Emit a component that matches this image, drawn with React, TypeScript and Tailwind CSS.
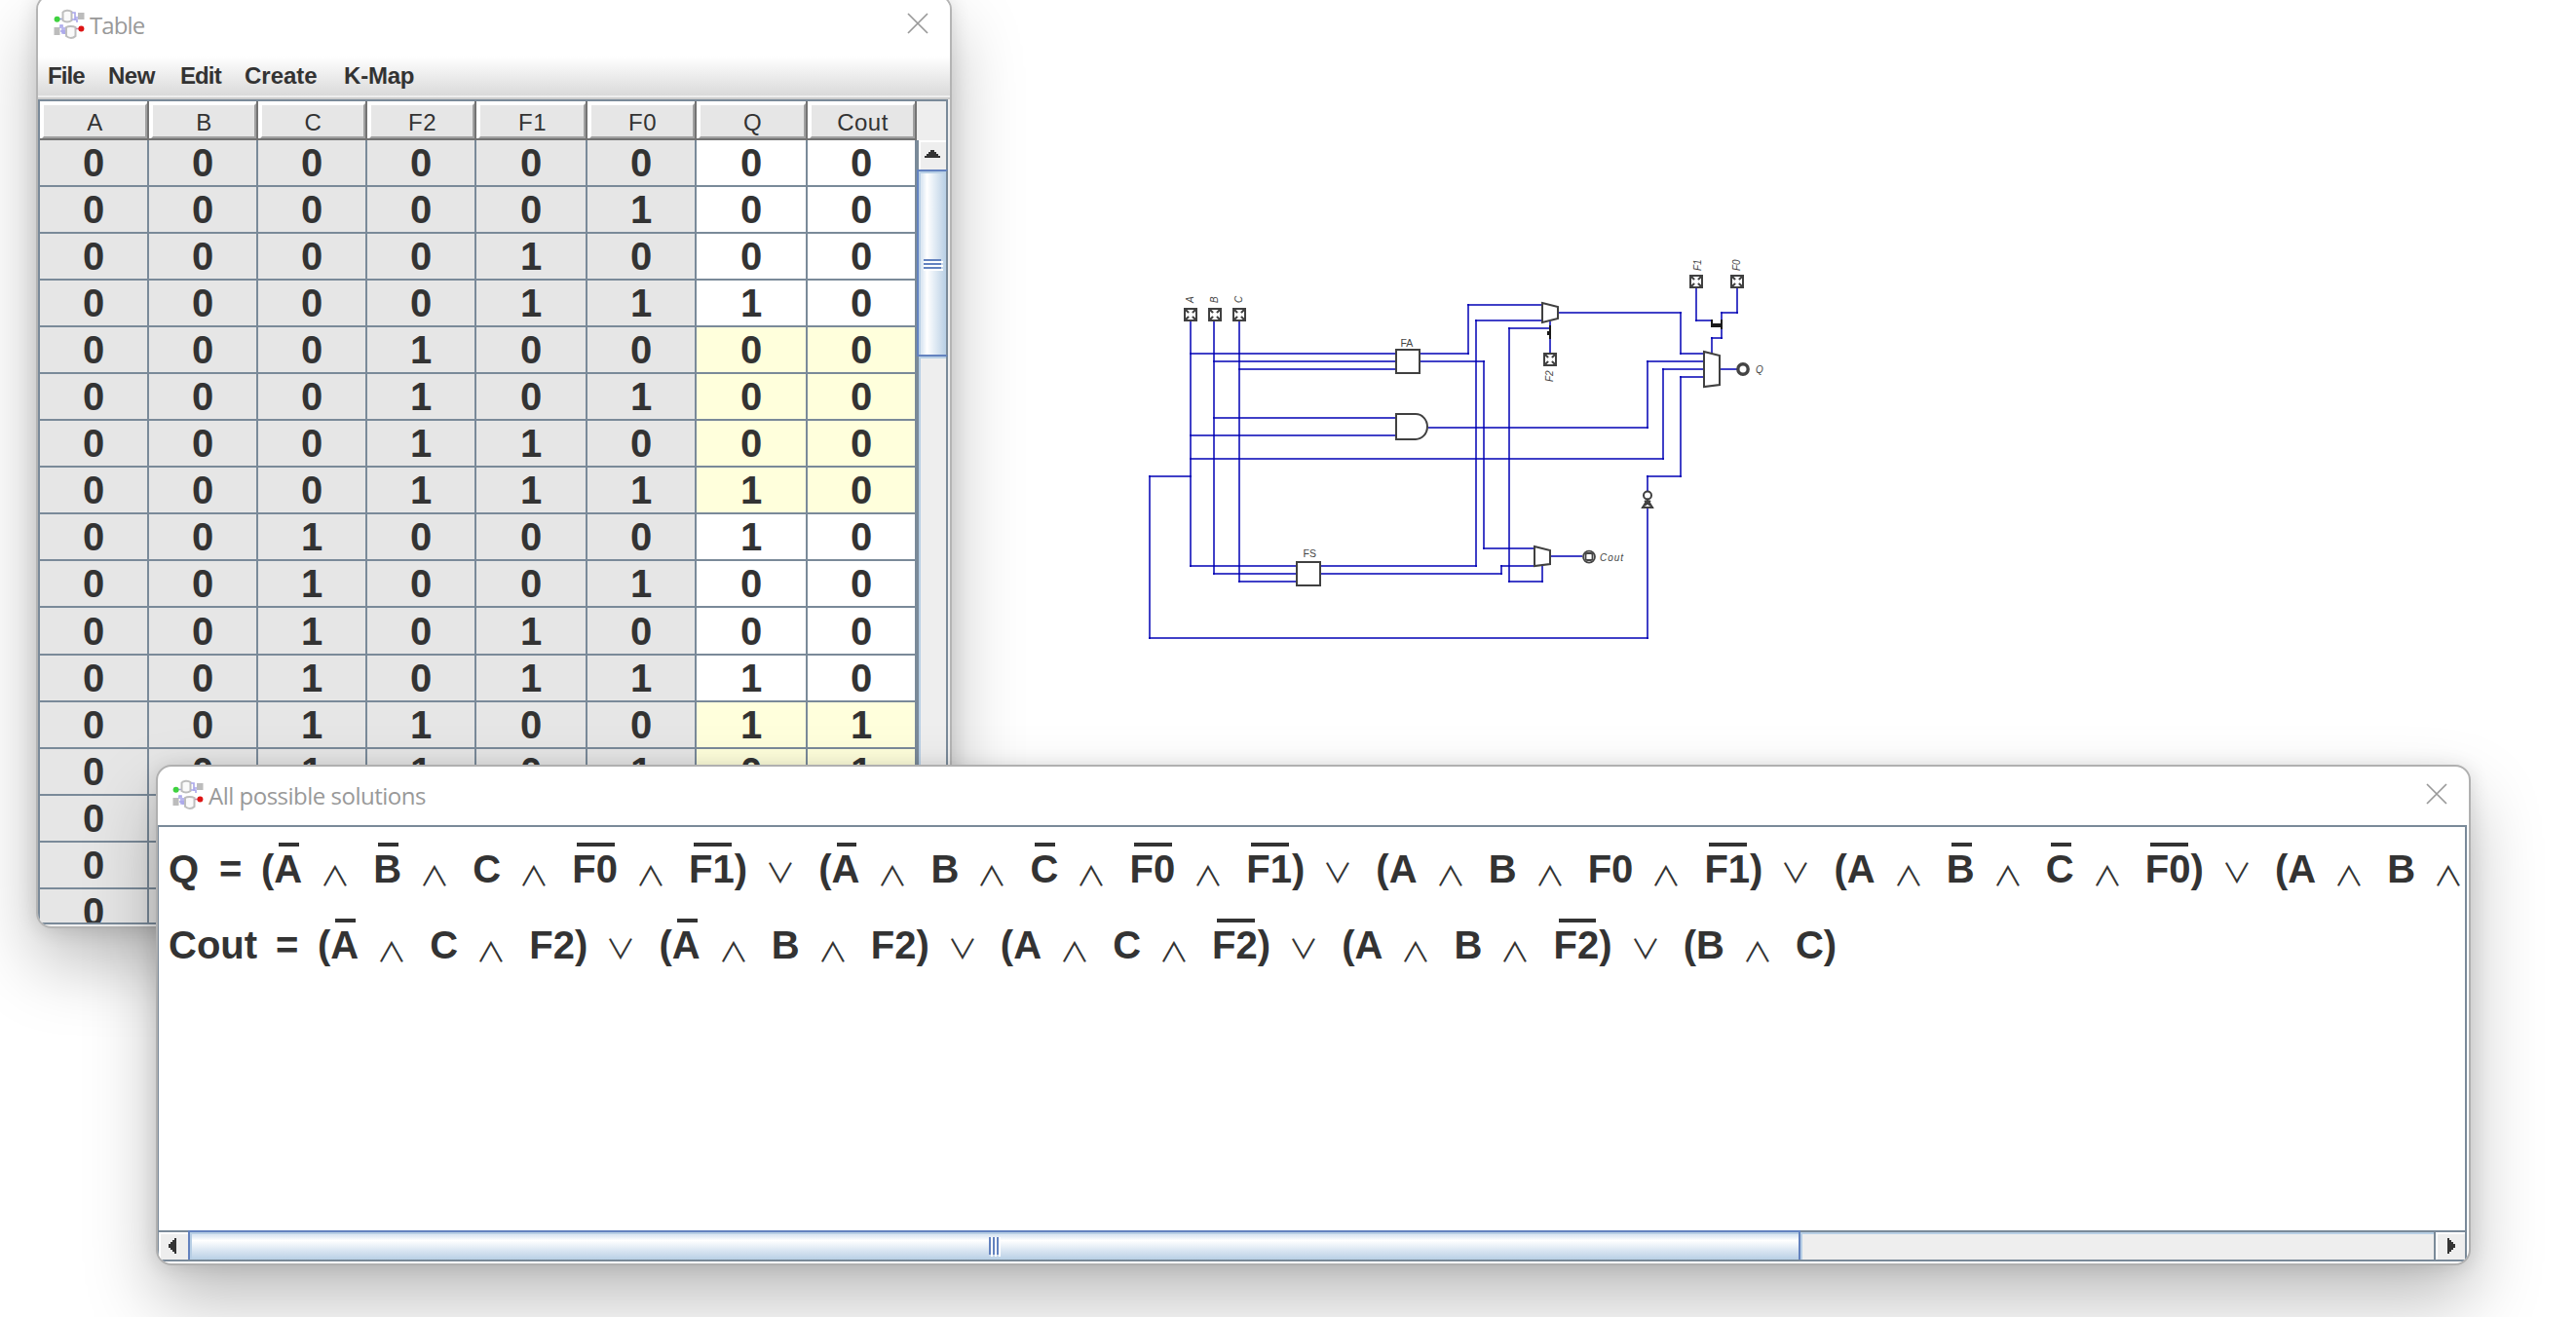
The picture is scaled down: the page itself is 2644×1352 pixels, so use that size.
import React from "react";

const COLUMNS = ["A", "B", "C", "F2", "F1", "F0", "Q", "Cout"];

const COLUMN_WIDTHS = [
  "w-[112px]",
  "w-[112px]",
  "w-[112px]",
  "w-[112px]",
  "w-[114px]",
  "w-[112px]",
  "w-[114px]",
  "w-[112px]",
];

const ROWS = [
  "00000000",
  "00000100",
  "00001000",
  "00001110",
  "00010000",
  "00010100",
  "00011000",
  "00011110",
  "00100010",
  "00100100",
  "00101000",
  "00101110",
  "00110011",
  "00110101",
  "00111001",
  "00111111",
  "01000010",
];

function AppIcon() {
  return (
    <svg width="32" height="32" viewBox="0 0 32 32" fill="none" className="shrink-0">
      <g strokeWidth="1.6">
        <path d="M6 10.5H9" stroke="#9a9ae0" />
        <path d="M9.5 3.5C11 1.5 16 1 18.5 3V12C16 14 12 14 9.5 12Z" stroke="#bdbdbd" fill="#fafafa" strokeWidth="2" />
        <path d="M19 4H22V9H25M19 11H24V14M22 4V12" stroke="#a9a6ea" />
        <rect x="25" y="4" width="6.5" height="7" fill="#bcbcbc" />
        <rect x="0.5" y="19" width="6" height="8" fill="#bcbcbc" />
        <path d="M7 23H12M7 20V17H9V25H13M11 19V26" stroke="#a9a6ea" />
        <path d="M13 19C15 17.5 20 17.5 22.5 19V28C20 30.5 16 30.5 13 28Z" stroke="#bdbdbd" fill="#fafafa" strokeWidth="2" />
        <path d="M23 20.5H26" stroke="#c98aa8" />
      </g>
      <circle cx="3.6" cy="10.8" r="3" fill="#3fd23f" />
      <circle cx="28.4" cy="20.4" r="3" fill="#dd1414" />
    </svg>
  );
}

function CloseIcon() {
  return (
    <svg width="22" height="22" viewBox="0 0 22 22" fill="none" stroke="#999999" strokeWidth="1.7">
      <path d="M1 1L21 21M21 1L1 21" />
    </svg>
  );
}

function HeaderCell({ label, width }: { label: string; width: string }) {
  return (
    <div className={`${width} h-10 shrink-0 border-r-2 border-b-2 border-[#737373]`}>
      <div className="h-full border-t-2 border-l-2 border-white">
        <div className="flex h-full items-center justify-center border-2 border-t-white border-l-white border-r-[#a0a0a0] border-b-[#a0a0a0] bg-[#e6e6e6] pt-1 pl-px text-[24px] leading-none tracking-[0.5px]">
          {label}
        </div>
      </div>
    </div>
  );
}

function BodyRow({ bits, index }: { bits: string; index: number }) {
  const tint = Math.floor(index / 4) % 2 === 1 ? "bg-[#ffffdc]" : "bg-white";
  return (
    <div className={`${index === 10 ? "h-[49px]" : "h-12"} flex shrink-0`}>
      {bits.split("").map((bit, i) => (
        <div
          key={i}
          className={`${COLUMN_WIDTHS[i]} ${i < 6 ? "bg-[#e6e6e6]" : tint} flex shrink-0 items-center justify-center border-r-2 border-b-2 border-[#7a8a99] text-[40px] leading-[46px] font-bold`}
        >
          {bit}
        </div>
      ))}
    </div>
  );
}

function VerticalScrollbar() {
  return (
    <div className="flex w-8 shrink-0 flex-col bg-[#eeeeee]">
      <div className="h-10 shrink-0 border-r-2 border-[#7a8a99]" />
      <div className="flex h-[30px] shrink-0 items-start justify-center border-r-2 border-l-2 border-[#7a8a99]">
        <div className="flex h-full w-full border-t-2 border-l-2 border-white pt-2 pl-1">
          <svg width="16" height="8" viewBox="0 0 16 8" shapeRendering="crispEdges">
            <path d="M6 0H10V2H12V4H14V6H16V8H0V6H2V4H4V2H6Z" fill="#333333" />
          </svg>
        </div>
      </div>
      <div className="flex h-[192px] shrink-0 border-2 border-[#6382bf] border-r-[#7a8a99]">
        <div className="flex w-full items-center justify-center border-t-2 border-l-2 border-[#b8cfe5] bg-linear-to-r from-[#dde8f3] from-5% via-white via-25% to-[#b8cfe5]">
          <div className="mt-0.5 flex flex-col">
            {[0, 1, 2].map((n) => (
              <div key={n} className="w-5 border-b-2 border-white">
                <div className="h-0.5 w-[18px] bg-[#6382bf]" />
              </div>
            ))}
          </div>
        </div>
      </div>
      <div className="grow border-r-2 border-l-2 border-[#7a8a99]">
        <div className="h-full border-t-2 border-l-2 border-[#b8cfe5]" />
      </div>
    </div>
  );
}

const MENUS: [string, string][] = [
  ["File", "w-[62px] tracking-[-0.9px]"],
  ["New", "w-[74px] tracking-[-0.5px]"],
  ["Edit", "w-[66px] tracking-[-0.9px]"],
  ["Create", "w-[102px] tracking-[0px]"],
  ["K-Map", "w-[90px] tracking-[-0.2px]"],
];

function TableWindow() {
  return (
    <section className="absolute top-[-6px] left-[37px] flex h-[959px] w-[940px] flex-col overflow-hidden rounded-[16px] border-2 border-[#b4b4b4] bg-[#f0f0f0] shadow-[0_36px_72px_rgba(0,0,0,0.26),0_2px_20px_rgba(0,0,0,0.12)]">
      <header className="flex h-[62px] shrink-0 items-start justify-between bg-white pt-[13px] pr-[22px] pl-4">
        <div className="flex items-start gap-[5px]">
          <AppIcon />
          <span className="mt-[3px] font-['Open_Sans','Noto_Sans',sans-serif] text-[24px] leading-[28px] tracking-[-0.9px] text-[#999999]">
            Table
          </span>
        </div>
        <div className="mt-1">
          <CloseIcon />
        </div>
      </header>
      <nav className="flex h-[40px] shrink-0 items-center bg-linear-to-b from-white to-[#dadada] pl-[10px] text-[24px] leading-[28px] font-bold">
        {MENUS.map(([name, cls]) => (
          <span key={name} className={`${cls} shrink-0`}>
            {name}
          </span>
        ))}
      </nav>
      <div className="h-1 shrink-0 border-b-2 border-[#cccccc] bg-[#eeeeee]" />
      <div className="mr-0.5 flex h-[847px] shrink-0 overflow-hidden border-y-2 border-l-2 border-[#7a8a99]">
        <div className="flex w-[900px] shrink-0 flex-col overflow-hidden">
          <div className="flex shrink-0">
            {COLUMNS.map((c, i) => (
              <HeaderCell key={c} label={c} width={COLUMN_WIDTHS[i]} />
            ))}
          </div>
          {ROWS.map((bits, i) => (
            <BodyRow key={bits} bits={bits} index={i} />
          ))}
        </div>
        <VerticalScrollbar />
      </div>
    </section>
  );
}

/* Formula tokens: a leading "!" marks a negated variable; "&" and "|" are operators. */
const Q_TERMS = "( !A & !B & C & !F0 & !F1 ) | ( !A & B & !C & !F0 & !F1 ) | ( A & B & F0 & !F1 ) | ( A & !B & !C & !F0 ) | ( A & B &";
const COUT_TERMS = "( !A & C & F2 ) | ( !A & B & F2 ) | ( A & C & !F2 ) | ( A & B & !F2 ) | ( B & C )";

function Token({ value }: { value: string }) {
  if (value === "&" || value === "|") {
    return (
      <span className="flex w-[73.1px] shrink-0 justify-center pr-[5px] font-['Noto_Sans_CJK_JP',sans-serif] text-[28px] font-normal">
        <span className={`${value === "&" ? "translate-y-[6px]" : "translate-y-[3px]"} block scale-x-110`}>
          {value === "&" ? "∧" : "∨"}
        </span>
      </span>
    );
  }
  if (value.startsWith("!")) {
    return (
      <span className="relative shrink-0">
        {value.slice(1)}
        <span className="absolute top-[-4px] right-[3px] left-[5px] h-1 bg-[#333333]" />
      </span>
    );
  }
  return <span className="shrink-0">{value}</span>;
}

function Formula({ name, nameWidth, terms }: { name: string; nameWidth: string; terms: string }) {
  return (
    <div className="flex h-[78px] shrink-0 items-start overflow-hidden pt-[4px] pl-[10px] text-[40px] leading-[46px] font-bold whitespace-nowrap">
      <span className={`${nameWidth} shrink-0`}>{name}</span>
      <span className="w-[43px] shrink-0">=</span>
      {terms.split(" ").map((t, i) => (
        <Token key={i} value={t} />
      ))}
    </div>
  );
}

function HorizontalScrollbar() {
  return (
    <div className="flex h-[30px] shrink-0 bg-[#eeeeee]">
      <div className="w-[30px] shrink-0 border-t-2 border-[#7a8a99]">
        <div className="h-full border-t-2 border-l-2 border-white pt-1 pl-2">
          <svg width="8" height="16" viewBox="0 0 8 16" shapeRendering="crispEdges">
            <path d="M8 0V16H6V14H4V12H2V10H0V6H2V4H4V2H6V0Z" fill="#333333" />
          </svg>
        </div>
      </div>
      <div className="w-[1655px] shrink-0 border-x-2 border-t-2 border-[#6382bf]">
        <div className="flex h-full items-center justify-center border-t-2 border-l-2 border-[#b8cfe5] bg-linear-to-b from-[#dde8f3] from-5% via-white via-25% to-[#b8cfe5] pr-0.5">
          <div className="flex">
            {[0, 1, 2].map((n) => (
              <div key={n} className="h-5 border-r-2 border-white">
                <div className="h-[18px] w-0.5 bg-[#6382bf]" />
              </div>
            ))}
          </div>
        </div>
      </div>
      <div className="grow border-t-2 border-[#7a8a99]">
        <div className="h-full border-t-2 border-l-2 border-[#b8cfe5]" />
      </div>
      <div className="w-8 shrink-0 border-t-2 border-l-2 border-[#7a8a99]">
        <div className="h-full border-t-2 border-l-2 border-white pt-1 pl-[10px]">
          <svg width="8" height="16" viewBox="0 0 8 16" shapeRendering="crispEdges">
            <path d="M0 0V16H2V14H4V12H6V10H8V6H6V4H4V2H2V0Z" fill="#333333" />
          </svg>
        </div>
      </div>
    </div>
  );
}

function SolutionsWindow() {
  return (
    <section className="absolute top-[785px] left-[160px] flex h-[514px] w-[2376px] flex-col overflow-hidden rounded-[16px] border-2 border-[#b0b0b0] bg-white shadow-[0_36px_72px_rgba(0,0,0,0.26),0_2px_20px_rgba(0,0,0,0.12)]">
      <header className="flex h-[60px] shrink-0 items-start justify-between pt-[13px] pr-[22px] pl-[15px]">
        <div className="flex items-start gap-[5px]">
          <AppIcon />
          <span className="mt-[3px] font-['Open_Sans','Noto_Sans',sans-serif] text-[24px] leading-[28px] tracking-[-0.5px] text-[#999999]">
            All possible solutions
          </span>
        </div>
        <div className="mt-1">
          <CloseIcon />
        </div>
      </header>
      <div className="mr-0.5 mb-0.5 ml-[-1px] flex grow flex-col overflow-hidden border-2 border-[#7a8a99]">
        <div className="flex grow flex-col overflow-hidden pt-[16px]">
          <Formula name="Q" nameWidth="w-[52px]" terms={Q_TERMS} />
          <Formula name="Cout" nameWidth="w-[110px]" terms={COUT_TERMS} />
        </div>
        <HorizontalScrollbar />
      </div>
    </section>
  );
}

/* Wire segments as x1, y1, x2, y2 */
const WIRES: [number, number, number, number][] = [
  [1222, 330, 1222, 582],
  [1246, 330, 1246, 590],
  [1272, 330, 1272, 598],
  [1221, 363, 1432, 363],
  [1245, 371, 1432, 371],
  [1271, 379, 1432, 379],
  [1245, 429, 1432, 429],
  [1221, 447, 1432, 447],
  [1221, 471, 1708, 471],
  [1179, 489, 1223, 489],
  [1180, 488, 1180, 656],
  [1179, 655, 1692, 655],
  [1221, 581, 1330, 581],
  [1245, 589, 1330, 589],
  [1271, 597, 1330, 597],
  [1356, 581, 1516, 581],
  [1356, 589, 1542, 589],
  [1458, 363, 1508, 363],
  [1507, 312, 1507, 364],
  [1506, 313, 1582, 313],
  [1458, 371, 1524, 371],
  [1523, 370, 1523, 564],
  [1522, 563, 1574, 563],
  [1515, 328, 1515, 582],
  [1514, 329, 1582, 329],
  [1541, 580, 1541, 590],
  [1540, 581, 1574, 581],
  [1549, 336, 1549, 598],
  [1548, 337, 1592, 337],
  [1548, 597, 1584, 597],
  [1583, 581, 1583, 598],
  [1591, 330, 1591, 362],
  [1600, 321, 1726, 321],
  [1725, 320, 1725, 364],
  [1724, 363, 1748, 363],
  [1466, 439, 1692, 439],
  [1691, 370, 1691, 440],
  [1690, 371, 1748, 371],
  [1707, 378, 1707, 472],
  [1706, 379, 1748, 379],
  [1725, 386, 1725, 490],
  [1724, 387, 1748, 387],
  [1690, 489, 1726, 489],
  [1691, 488, 1691, 505],
  [1691, 522, 1691, 656],
  [1592, 571, 1624, 571],
  [1757, 346, 1757, 363],
  [1756, 347, 1768, 347],
  [1767, 320, 1767, 348],
  [1766, 321, 1784, 321],
  [1783, 296, 1783, 322],
  [1741, 296, 1741, 330],
  [1740, 329, 1758, 329],
  [1766, 379, 1783, 379],
];

const PINS: [number, number][] = [
  [1222, 323],
  [1247, 323],
  [1272, 323],
  [1741, 289],
  [1783, 289],
  [1591, 369],
];

const UPRIGHT_LABELS: [string, number, number][] = [
  ["A", 1225, 311],
  ["B", 1250, 311],
  ["C", 1275, 311],
  ["F1", 1746, 278],
  ["F0", 1786, 278],
  ["F2", 1594, 392],
];

function Circuit() {
  return (
    <svg
      width="700"
      height="440"
      viewBox="1160 240 700 440"
      fill="none"
      className="absolute top-[240px] left-[1160px] font-['Liberation_Sans',Arial,sans-serif]"
    >
      <g stroke="#0000b4" strokeOpacity="0.75" strokeWidth="2">
        {WIRES.map(([x1, y1, x2, y2], i) => (
          <line key={i} x1={x1} y1={y1} x2={x2} y2={y2} />
        ))}
      </g>
      <g stroke="#404040" strokeWidth="2">
        <rect x="1433" y="359" width="24" height="24" fill="white" />
        <rect x="1331" y="577" width="24" height="24" fill="white" />
        <path d="M1433 425H1453A12 13 0 0 1 1453 451H1433Z" fill="white" />
        <path d="M1583 311L1599 315V327L1583 331Z" fill="white" />
        <path d="M1575 561L1591 565V579L1575 581Z" fill="white" />
        <path d="M1749 361L1765 365V395L1749 397Z" fill="white" />
        <circle cx="1691" cy="508.5" r="4" fill="white" />
        <path d="M1686 521L1691 513L1696 521Z" fill="white" />
        <path d="M1685 521H1697M1688 514L1694 519M1694 514L1688 519" />
      </g>
      <g stroke="#1a1a1a" strokeWidth="2">
        <path d="M1591 334V348" />
        <path d="M1588 342H1592" strokeWidth="4" />
        <path d="M1757 328V335M1767 328V338" />
        <path d="M1756 334H1768" strokeWidth="4" />
      </g>
      {PINS.map(([x, y], i) => (
        <g key={i} stroke="#404040">
          <rect x={x - 6} y={y - 6} width="12" height="12" fill="white" strokeWidth="2" />
          <path d={`M${x - 5} ${y - 5}L${x + 5} ${y + 5}M${x + 5} ${y - 5}L${x - 5} ${y + 5}`} strokeWidth="2" />
          <circle cx={x} cy={y} r="2.8" fill="white" stroke="none" />
        </g>
      ))}
      <circle cx="1789" cy="379" r="5.2" stroke="#444444" strokeWidth="3.4" fill="white" />
      <circle cx="1631" cy="571.6" r="6" stroke="#444444" strokeWidth="1.8" fill="white" />
      <rect x="1627.5" y="568" width="7" height="7" rx="1.5" stroke="#444444" strokeWidth="1.8" />
      <g fill="#444444" fontSize="10">
        <text x="1437.5" y="356" fontSize="10.5">FA</text>
        <text x="1337.5" y="572" fontSize="10.5">FS</text>
        <text x="1642" y="576" fontStyle="italic" textLength="24">Cout</text>
        <text x="1802" y="383" fontStyle="italic">Q</text>
        {UPRIGHT_LABELS.map(([t, x, y]) => (
          <text key={t} transform={`translate(${x} ${y}) rotate(-90)`} fontStyle="italic">
            {t}
          </text>
        ))}
      </g>
    </svg>
  );
}

export default function App() {
  return (
    <main className="relative h-[1352px] w-[2644px] overflow-hidden bg-white font-['Liberation_Sans',Arial,sans-serif] text-[#333333]">
      <Circuit />
      <TableWindow />
      <SolutionsWindow />
    </main>
  );
}
